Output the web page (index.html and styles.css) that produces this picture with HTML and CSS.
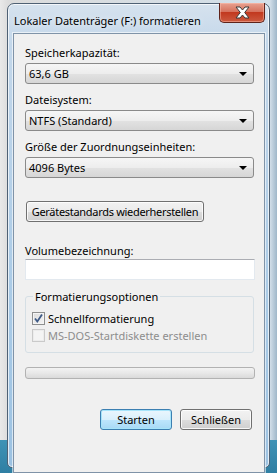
FILE: index.html
```html
<!DOCTYPE html>
<html lang="de">
  <head>
    <meta charset="UTF-8" />
    <title>Lokaler Datenträger (F:) formatieren</title>
    <link rel="stylesheet" href="styles.css">
  </head>
  <body>
    <div class="desk">
      <div class="window">
        <div class="titlebar">
          <span class="title">Lokaler Datenträger (F:) formatieren</span>
          <button class="close" type="button">
            <svg width="17" height="13" viewBox="0 0 17 13">
              <path d="M2 1 H6 L8.5 4 L11 1 H15 L10.7 6.5 L15 12 H11 L8.5 9 L6 12 H2 L6.3 6.5 Z" fill="#ffffff" stroke="#3b3b3b" stroke-width="1" stroke-linejoin="round"/>
            </svg>
          </button>
        </div>

        <div class="client">
          <div class="label">Speicherkapazität:</div>
          <div class="combo"><span>63,6 GB</span><i class="arrow"></i></div>

          <div class="label">Dateisystem:</div>
          <div class="combo"><span>NTFS (Standard)</span><i class="arrow"></i></div>

          <div class="label">Größe der Zuordnungseinheiten:</div>
          <div class="combo"><span>4096 Bytes</span><i class="arrow"></i></div>

          <button class="btn restore" type="button">Gerätestandards wiederherstellen</button>

          <div class="label label-vol">Volumebezeichnung:</div>
          <input class="textbox" type="text" value="" />

          <fieldset class="group">
            <legend>Formatierungsoptionen</legend>
            <div class="check-row">
              <span class="checkbox checked">
                <svg width="11" height="11" viewBox="0 0 11 11">
                  <path d="M2 5.5 L4.3 8.5 L9 1.5" fill="none" stroke="#3e5a86" stroke-width="1.8"/>
                </svg>
              </span>
              <span>Schnellformatierung</span>
            </div>
            <div class="check-row disabled">
              <span class="checkbox"></span>
              <span>MS-DOS-Startdiskette erstellen</span>
            </div>
          </fieldset>

          <div class="progress"></div>

          <div class="actions">
            <button class="btn default" type="button">Starten</button>
            <button class="btn" type="button">Schließen</button>
          </div>
        </div>
      </div>
    </div>
  </body>
</html>
```

FILE: styles.css
```css
html, body {
  margin: 0;
  padding: 0;
}
body {
  width: 277px;
  height: 473px;
  overflow: hidden;
  font-family: "Noto Sans", "Open Sans", sans-serif;
  font-size: 11px;
  color: #000;
  /* what is behind the dialog: explorer window on the left, blue stuff below */
  background:
    linear-gradient(to bottom, transparent 0, transparent 440px, #3f93b6 440px, #2f7fa3 473px),
    linear-gradient(to right, #e9e9e9 0, #dcdcdc 8px, #d2dfe9 270px, #9fb7c9 277px);
}
.desk {
  padding: 3px 0 0 7px;
}

/* Aero frame */
.window {
  width: 261px;
  height: 463px;
  border: 1px solid #4f6174;
  border-radius: 7px 7px 5px 5px;
  background: linear-gradient(to bottom, #d6e2ee 0, #c3d7ea 40px, #a9cae6 300px, #9cc2e2 100%);
  box-shadow: inset 0 0 0 1px rgba(255, 255, 255, 0.7);
  position: relative;
}
.titlebar {
  height: 29px;
  padding-left: 6px;
  display: flex;
  align-items: center;
}
.title {
  font-size: 11px;
  margin-top: 3px;
  color: #000;
  text-shadow: 0 0 6px rgba(255, 255, 255, 0.9);
}
.close {
  position: absolute;
  top: -1px;
  right: 4px;
  width: 46px;
  height: 20px;
  padding: 0;
  border: 1px solid #5e2219;
  border-top: none;
  border-radius: 0 0 5px 5px;
  background: linear-gradient(to bottom, #e8a190 0, #d6735e 45%, #c2391f 50%, #cc5a3f 100%);
  box-shadow: inset 0 0 0 1px rgba(255, 200, 185, 0.45);
  display: flex;
  align-items: center;
  justify-content: center;
}

/* dialog body */
.client {
  margin: 0 4px 0 5px;
  height: 427px;
  border: 1px solid #7f93a8;
  background: #f0f0f0;
  padding: 11px 10px 0 11px;
  box-shadow: 0 0 0 1px rgba(255, 255, 255, 0.6);
}
.label {
  line-height: 15px;
  height: 15px;
  margin-top: 8px;
}
.client > .label:first-child {
  margin-top: 0;
}
.combo {
  margin-top: 3px;
  height: 19px;
  border: 1px solid #8a8a8a;
  border-radius: 3px;
  background: linear-gradient(to bottom, #f6f6f6 0, #ededed 50%, #e2e2e2 51%, #d6d6d6 100%);
  display: flex;
  align-items: center;
  justify-content: space-between;
  padding: 0 6px 0 3px;
}
.arrow {
  width: 0;
  height: 0;
  border-left: 4px solid transparent;
  border-right: 4px solid transparent;
  border-top: 4px solid #000;
}

.btn {
  font-family: inherit;
  font-size: 11px;
  color: #000;
  height: 21px;
  padding: 0 6px;
  white-space: nowrap;
  border: 1px solid #707070;
  border-radius: 3px;
  background: linear-gradient(to bottom, #f2f2f2 0, #ebebeb 50%, #dddddd 51%, #cfcfcf 100%);
  box-shadow: inset 0 0 0 1px rgba(255, 255, 255, 0.8);
}
.restore {
  display: block;
  margin-top: 23px;
  margin-left: 1px;
  width: 178px;
  padding: 0 4px;
  letter-spacing: -0.3px;
}
.label-vol {
  margin-top: 21px;
}
.textbox {
  display: block;
  box-sizing: border-box;
  margin: 1px 0 0 0;
  width: 230px;
  height: 21px;
  border: 1px solid #e3e9ef;
  border-top-color: #abadb3;
  background: #fff;
  padding: 0;
}

.group {
  margin: 9px 0 0 0;
  padding: 7px 6px 7px 6px;
  height: 64px;
  box-sizing: border-box;
  border: 1px solid #d5dfe5;
  border-radius: 3px;
  min-width: 0;
}
.group legend {
  padding: 0 2px;
  margin-left: 1px;
  line-height: 15px;
}
.check-row {
  display: flex;
  align-items: center;
  gap: 3px;
  height: 15px;
  margin-bottom: 2px;
}
.checkbox {
  box-sizing: border-box;
  width: 13px;
  height: 13px;
  border: 1px solid #8e8f8f;
  background: linear-gradient(135deg, #dcdcdc 0, #f4f4f4 100%);
  box-shadow: inset 0 0 0 1px #f4f4f4;
  display: flex;
  align-items: center;
  justify-content: center;
}
.disabled {
  color: #8d8d8d;
}
.disabled .checkbox {
  border-color: #cacaca;
  background: #f4f4f4;
  box-shadow: inset 0 0 0 1px #ececec;
}

.progress {
  margin-top: 14px;
  width: 230px;
  height: 12px;
  box-sizing: border-box;
  border: 1px solid #b2b2b2;
  border-radius: 3px;
  background: linear-gradient(to bottom, #f3f3f3 0, #e8e8e8 50%, #dadada 100%);
}

.actions {
  margin-top: 30px;
  display: flex;
  justify-content: flex-end;
  gap: 8px;
  padding-right: 2px;
}
.actions .btn {
  width: 72px;
}
.btn.default {
  border-color: #3c7fb1;
  background: linear-gradient(to bottom, #eaf6fd 0, #d9f0fc 50%, #bee6fd 51%, #a7d9f5 100%);
  box-shadow: inset 0 0 0 1px #a6e4fa;
}
```
